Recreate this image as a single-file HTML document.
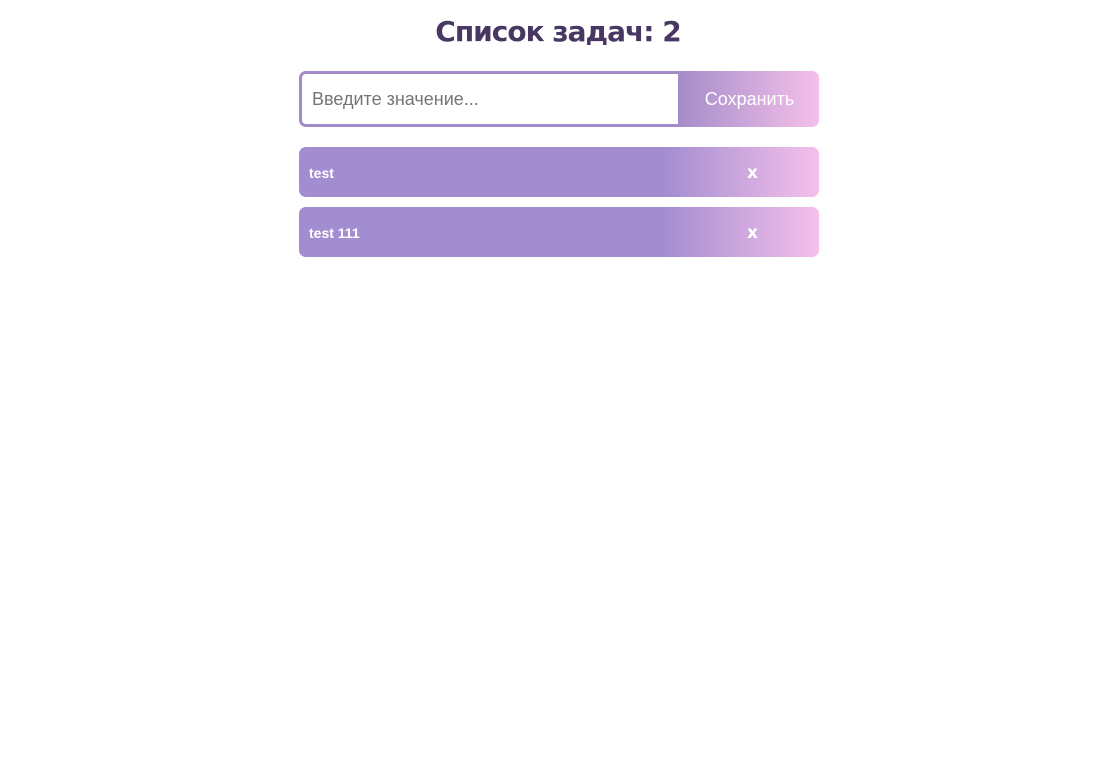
<!DOCTYPE html>
<html><head><meta charset="utf-8"><style>
*{box-sizing:border-box;margin:0;padding:0}
body{width:1106px;height:766px;background:#fff;font-family:"DejaVu Sans","Liberation Sans",sans-serif;position:relative;overflow:hidden}
h1{position:absolute;top:15px;left:0;width:1106px;padding-left:10px;text-align:center;font-size:28px;font-weight:bold;color:#483663;letter-spacing:-1px}
.form{position:absolute;left:299px;top:71px;width:520px;height:56px;border-radius:7px;background:linear-gradient(90deg,#a28bc8 0%,#a28bc8 72%,#f5c0ea 100%);}
.inp{position:absolute;left:3px;top:3px;width:376px;height:50px;background:#fff;border-radius:4px 0 0 4px;font-family:"Liberation Sans",sans-serif;font-size:18px;color:#757575;padding-left:10px;line-height:50px}
.btn{position:absolute;left:380px;top:0;width:141px;height:56px;line-height:56px;text-align:center;color:#fff;font-family:"Liberation Sans",sans-serif;font-size:18px}
.item{position:absolute;left:299px;width:520px;height:50px;border-radius:7px;background:linear-gradient(90deg,#a38dd1 0%,#a38dd1 70%,#f5c0ea 100%);color:#fff;font-weight:bold;font-family:"Liberation Sans",sans-serif;font-size:14px;line-height:53px;padding-left:10px}
.x{position:absolute;left:448px;top:0;font-size:17px;font-family:"DejaVu Sans",sans-serif}
</style></head><body>
<h1>Список задач: 2</h1>
<div class="form"><div class="inp">Введите значение...</div><div class="btn">Сохранить</div></div>
<div class="item" style="top:147px">test<span class="x">x</span></div>
<div class="item" style="top:207px">test 111<span class="x">x</span></div>
</body></html>
